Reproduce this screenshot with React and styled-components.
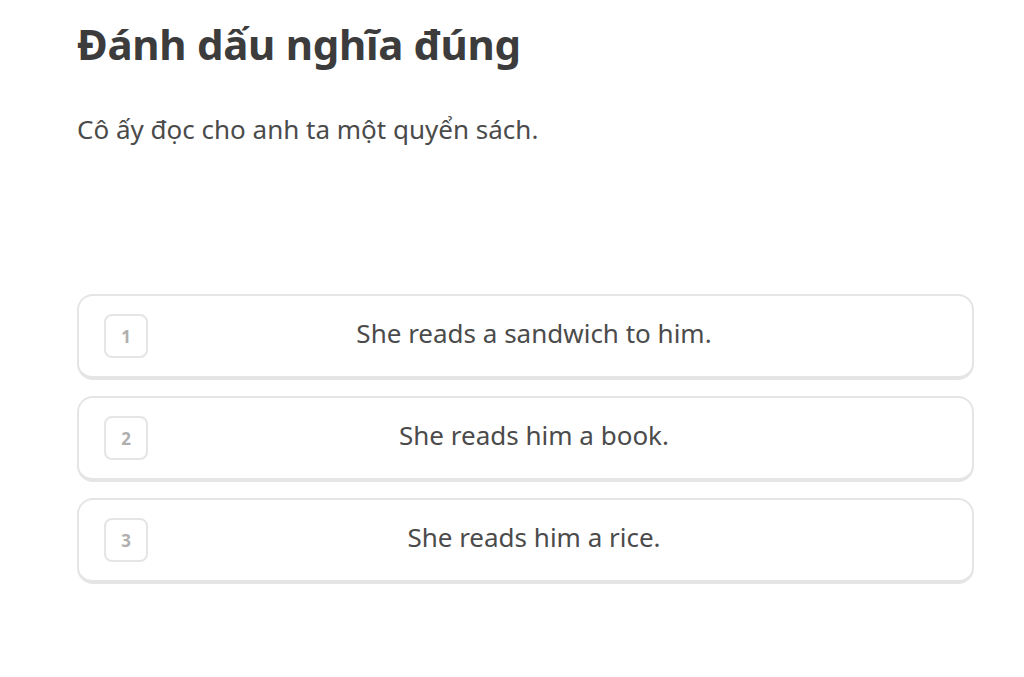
import React from "react";
import styled, { createGlobalStyle } from "styled-components";

const GlobalStyle = createGlobalStyle`
  html, body {
    margin: 0;
    padding: 0;
    background: #ffffff;
  }
  body {
    font-family: "Noto Sans", "DejaVu Sans", sans-serif;
    -webkit-font-smoothing: antialiased;
  }
`;

const options = [
  "She reads a sandwich to him.",
  "She reads him a book.",
  "She reads him a rice.",
];

function App() {
  return (
    <>
      <GlobalStyle />
      <Page>
        <Title>Đánh dấu nghĩa đúng</Title>
        <Prompt>Cô ấy đọc cho anh ta một quyển sách.</Prompt>
        <Choices>
          {options.map((text, i) => (
            <Choice key={text}>
              <Badge>{i + 1}</Badge>
              <ChoiceText>{text}</ChoiceText>
            </Choice>
          ))}
        </Choices>
      </Page>
    </>
  );
}

export default App;

const Page = styled.div`
  display: flex;
  flex-direction: column;
  padding: 16px 50px 0 77px;
`;

const Title = styled.h1`
  margin: 0;
  font-size: 42px;
  line-height: 56px;
  font-weight: 700;
  color: #3c3c3c;
  letter-spacing: -0.3px;
`;

const Prompt = styled.p`
  margin: 40px 0 0;
  font-size: 26px;
  line-height: 34px;
  color: #4b4b4b;
`;

const Choices = styled.div`
  display: flex;
  flex-direction: column;
  gap: 16px;
  margin-top: 148px;
`;

const Choice = styled.div`
  display: flex;
  align-items: center;
  height: 86px;
  box-sizing: border-box;
  padding: 0 52px 0 25px;
  border: 2px solid #e5e5e5;
  border-bottom-width: 4px;
  border-radius: 16px;
  background: #fff;
`;

const Badge = styled.div`
  display: flex;
  align-items: center;
  justify-content: center;
  width: 44px;
  height: 44px;
  box-sizing: border-box;
  border: 2px solid #e5e5e5;
  border-radius: 8px;
  font-size: 17px;
  font-weight: 700;
  color: #afafaf;
`;

const ChoiceText = styled.span`
  flex: 1;
  padding-bottom: 7px;
  text-align: center;
  font-size: 26px;
  color: #4b4b4b;
`;
